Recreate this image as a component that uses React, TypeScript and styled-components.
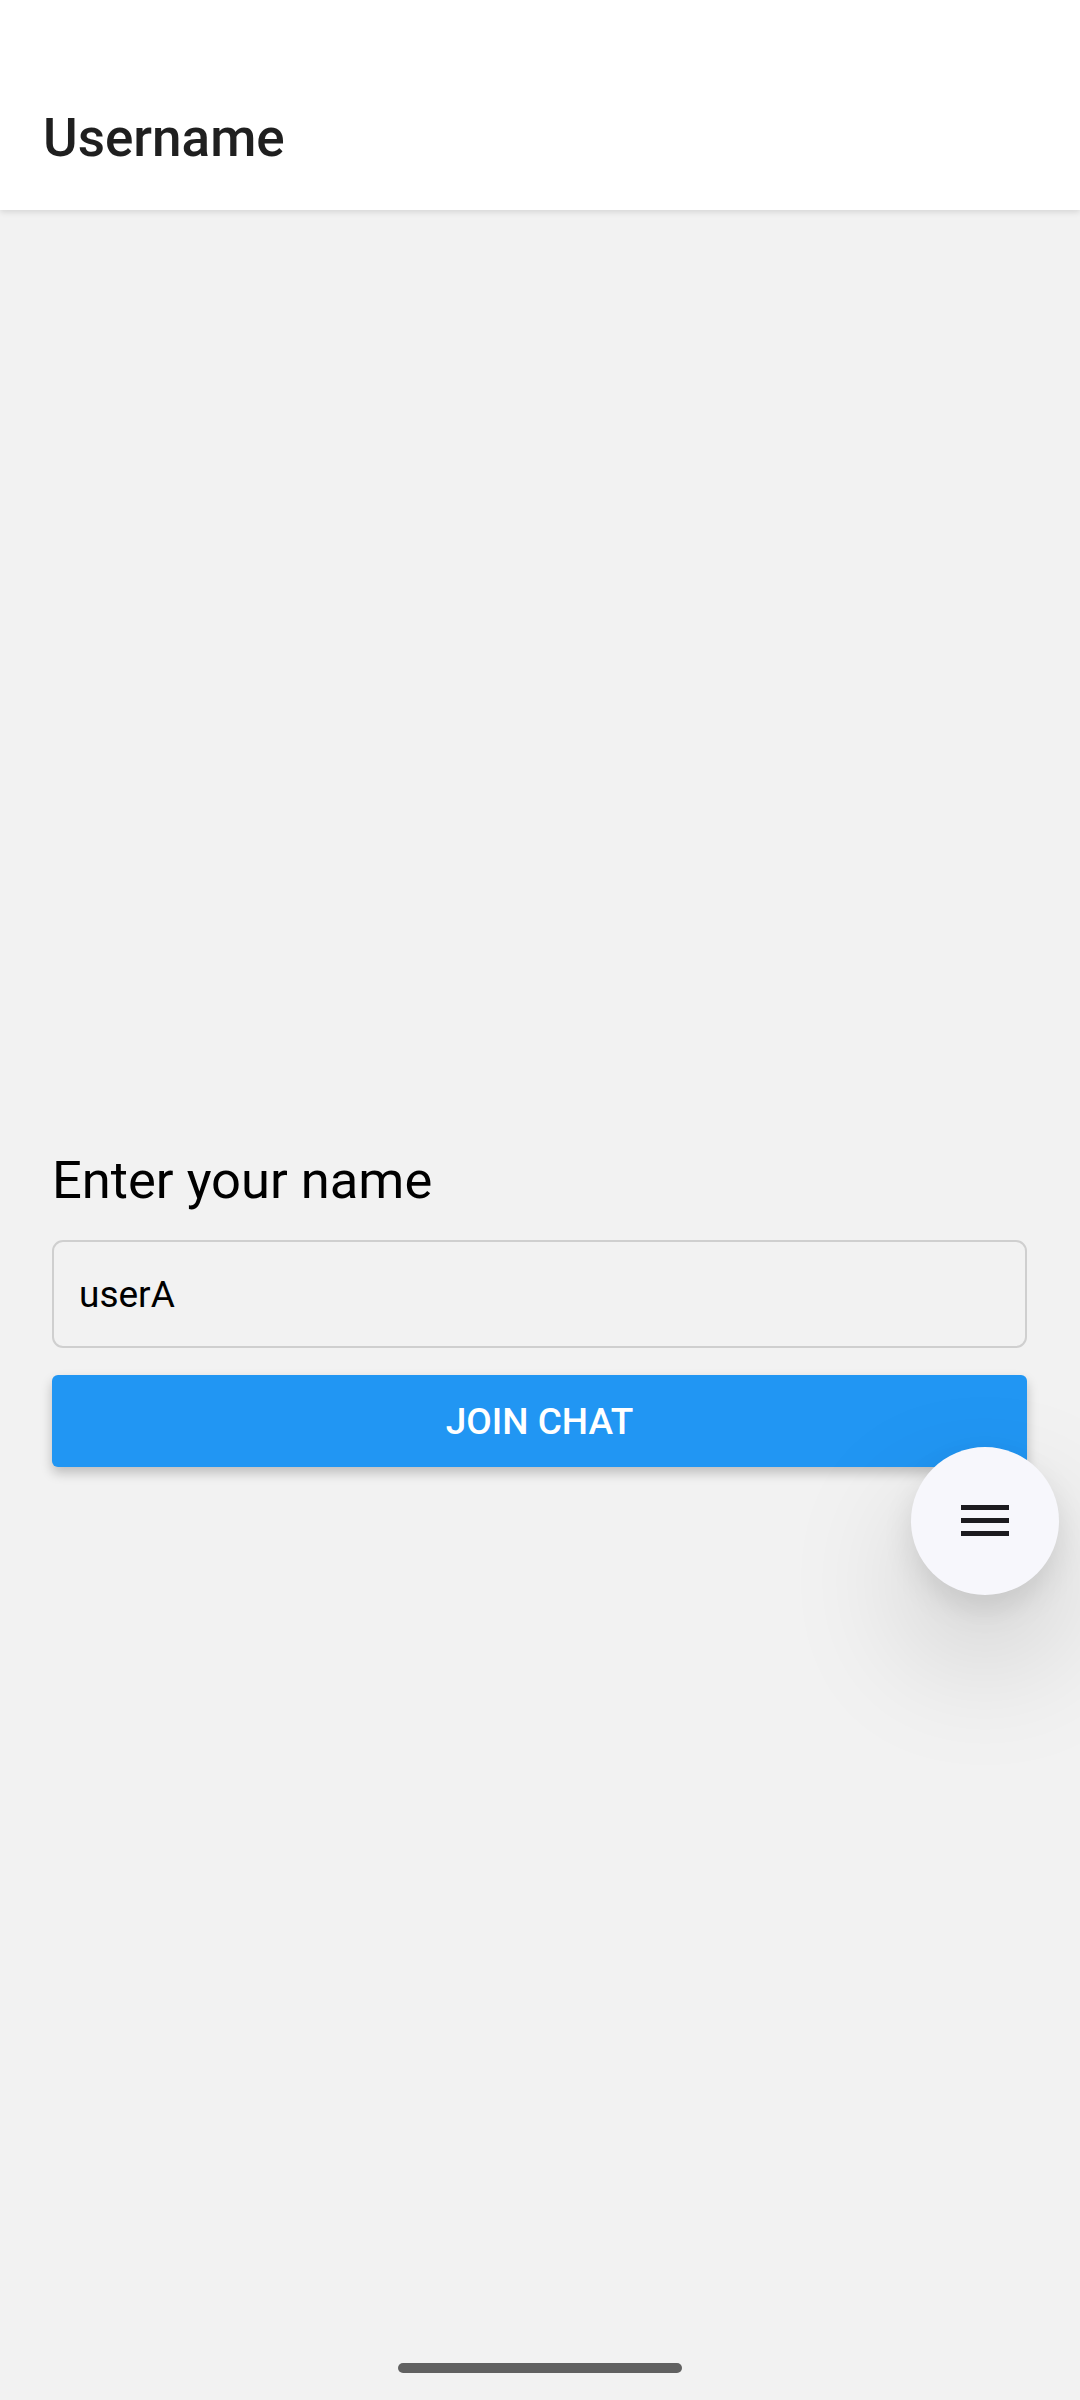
import React, { useState } from "react";
import styled, { createGlobalStyle } from "styled-components";

const GlobalStyle = createGlobalStyle`
  html, body {
    margin: 0;
    padding: 0;
    background: #f2f2f2;
    font-family: Roboto, "Noto Sans", sans-serif;
  }
`;

const Screen = styled.div`
  position: relative;
  width: 1080px;
  height: 2400px;
  display: flex;
  flex-direction: column;
  background: #f2f2f2;
  overflow: hidden;
`;

const TopBar = styled.header`
  height: 210px;
  box-sizing: border-box;
  padding: 107px 0 0 43px;
  background: #ffffff;
  box-shadow: 0 2px 6px rgba(0, 0, 0, 0.12);
  position: relative;
  z-index: 2;
`;

const Title = styled.h1`
  margin: 0;
  font-size: 53px;
  line-height: 62px;
  font-weight: 500;
  color: #1f1f1f;
`;

const Main = styled.main`
  flex: 1;
  display: flex;
  flex-direction: column;
  justify-content: center;
  padding: 6px 53px 0 52px;
`;

const Form = styled.form`
  display: flex;
  flex-direction: column;
`;

const Label = styled.label`
  font-size: 52.5px;
  line-height: 63px;
  color: #000;
  margin-bottom: 28px;
`;

const NameInput = styled.input`
  height: 108px;
  box-sizing: border-box;
  padding: 0 25px;
  border: 2px solid #cfcfcf;
  border-radius: 11px;
  background: #f2f2f2;
  font-family: Roboto, "Noto Sans", sans-serif;
  font-size: 37px;
  color: #000;
  outline: none;
`;

const JoinButton = styled.button`
  margin-top: 27px;
  height: 92px;
  border: none;
  border-radius: 6px;
  background: #2196f3;
  color: #fff;
  font-family: Roboto, "Noto Sans", sans-serif;
  font-size: 37px;
  font-weight: 500;
  text-transform: uppercase;
  box-shadow: 0 6px 12px rgba(0, 0, 0, 0.22);
`;

const Fab = styled.button`
  position: absolute;
  top: 1447px;
  right: 21px;
  width: 148px;
  height: 148px;
  border: none;
  border-radius: 50%;
  background: #f7f7fc;
  display: flex;
  align-items: center;
  justify-content: center;
  box-shadow: 0 60px 130px rgba(0, 0, 0, 0.17), 0 14px 30px rgba(0, 0, 0, 0.1);
  z-index: 3;
`;

const HomeHandle = styled.div`
  position: absolute;
  bottom: 27px;
  left: 398px;
  width: 284px;
  height: 10px;
  border-radius: 5px;
  background: #616161;
`;

const MenuIcon = () => (
  <svg width="48" height="32" viewBox="0 0 48 32">
    <rect x="0" y="0" width="48" height="5" fill="#1c1b1f" />
    <rect x="0" y="13" width="48" height="5" fill="#1c1b1f" />
    <rect x="0" y="26" width="48" height="5" fill="#1c1b1f" />
  </svg>
);

export default function App() {
  const [name, setName] = useState("userA");

  return (
    <Screen>
      <GlobalStyle />
      <TopBar>
        <Title>Username</Title>
      </TopBar>
      <Main>
        <Form onSubmit={(e) => e.preventDefault()}>
          <Label htmlFor="name">Enter your name</Label>
          <NameInput id="name" value={name} onChange={(e) => setName(e.target.value)} />
          <JoinButton type="submit">Join Chat</JoinButton>
        </Form>
      </Main>
      <Fab aria-label="menu">
        <MenuIcon />
      </Fab>
      <HomeHandle />
    </Screen>
  );
}
